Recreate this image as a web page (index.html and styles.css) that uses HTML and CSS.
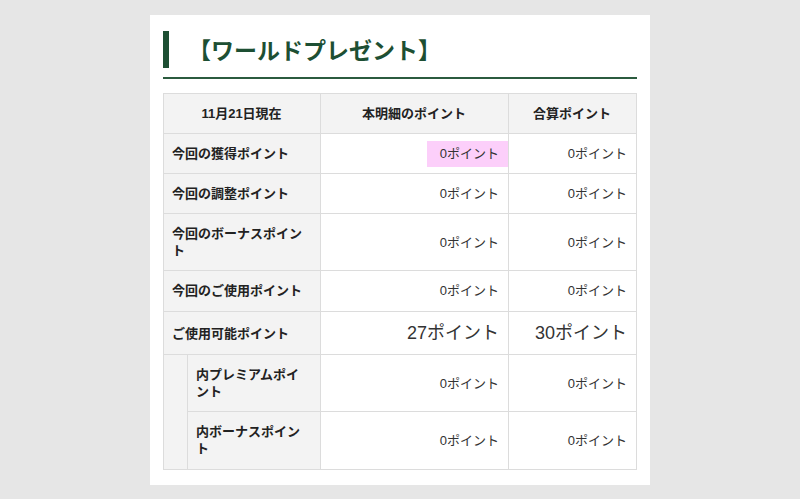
FILE: index.html
```html
<!DOCTYPE html>
<html lang="ja">
<head>
<meta charset="utf-8">
<title>ワールドプレゼント</title>
<link rel="stylesheet" href="styles.css">
</head>
<body>
<div class="card">
  <div class="heading"><h1 class="title">【ワールドプレゼント】</h1></div>
  <table class="points">
    <colgroup>
      <col class="c-indent">
      <col class="c-label">
      <col class="c-detail">
      <col class="c-total">
    </colgroup>
    <thead>
      <tr>
        <th colspan="2">11月21日現在</th>
        <th>本明細のポイント</th>
        <th>合算ポイント</th>
      </tr>
    </thead>
    <tbody>
      <tr>
        <th class="label" colspan="2">今回の獲得ポイント</th>
        <td><span class="mark">0ポイント</span></td>
        <td>0ポイント</td>
      </tr>
      <tr>
        <th class="label" colspan="2">今回の調整ポイント</th>
        <td>0ポイント</td>
        <td>0ポイント</td>
      </tr>
      <tr>
        <th class="label" colspan="2">今回のボーナスポイント</th>
        <td>0ポイント</td>
        <td>0ポイント</td>
      </tr>
      <tr class="used">
        <th class="label" colspan="2">今回のご使用ポイント</th>
        <td>0ポイント</td>
        <td>0ポイント</td>
      </tr>
      <tr class="big">
        <th class="label" colspan="2">ご使用可能ポイント</th>
        <td>27ポイント</td>
        <td>30ポイント</td>
      </tr>
      <tr>
        <th class="indent" rowspan="2"></th>
        <th class="label">内プレミアムポイント</th>
        <td>0ポイント</td>
        <td>0ポイント</td>
      </tr>
      <tr class="last">
        <th class="label">内ボーナスポイント</th>
        <td>0ポイント</td>
        <td>0ポイント</td>
      </tr>
    </tbody>
  </table>
</div>
</body>
</html>
```
FILE: styles.css
```css
html, body {
  margin: 0;
  padding: 0;
}
body {
  background: #e6e6e6;
  font-family: "Liberation Sans", "Noto Sans CJK JP", sans-serif;
  color: #222;
}
.card {
  background: #fff;
  width: 474px;
  margin: 15px 0 0 150px;
  padding: 16px 13px 15px 13px;
}
.heading {
  border-bottom: 2px solid #2b5b3f;
  padding-bottom: 9px;
  margin-bottom: 14px;
}
.title {
  margin: 0;
  border-left: 6px solid #1d4f33;
  padding-left: 19px;
  font-family: "Noto Sans CJK JP", sans-serif;
  font-size: 23px;
  line-height: 37px;
  font-weight: 700;
  color: #1d4f33;
}
.points {
  width: 473px;
  border-collapse: collapse;
  table-layout: fixed;
  font-size: 13px;
  line-height: 17px;
}
.c-indent { width: 24px; }
.c-label { width: 133px; }
.c-detail { width: 188px; }
.c-total { width: 128px; }
.points th,
.points td {
  border: 1px solid #dcdcdc;
  padding: 11px 9px 11px 8px;
}
.points thead th {
  background: #f3f3f3;
  text-align: center;
  font-weight: 700;
  color: #222;
}
.points th.label {
  background: #f3f3f3;
  text-align: left;
  font-weight: 700;
  padding-right: 10px;
}
.points th.indent {
  background: #f3f3f3;
  padding: 0;
}
.points td {
  text-align: right;
  color: #333;
}
.used th, .used td {
  padding-bottom: 12px;
}
.last th, .last td {
  padding-bottom: 12px;
}
.big td {
  font-size: 18px;
  line-height: 20px;
}
.mark {
  display: inline-block;
  background: #fccffa;
  padding: 4px 9px 5px 13px;
  margin: -4px -9px -5px 0;
}
```
